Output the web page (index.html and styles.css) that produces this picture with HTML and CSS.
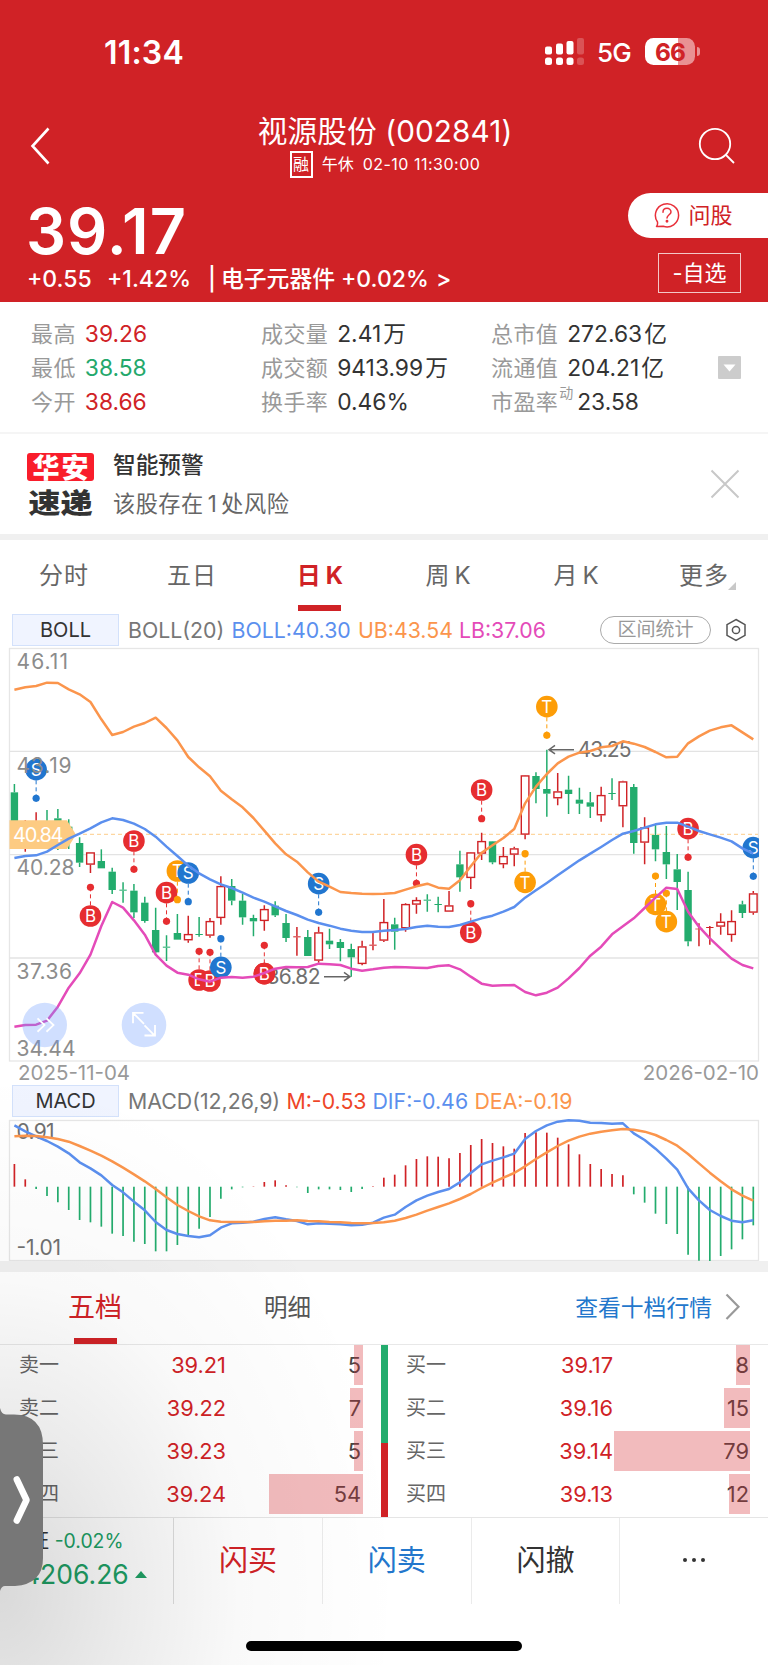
FILE: index.html
```html
<!DOCTYPE html>
<html lang="zh-CN">
<head>
<meta charset="utf-8">
<meta name="viewport" content="width=768">
<title>视源股份 (002841)</title>
<link rel="stylesheet" href="styles.css">
</head>
<body>
<div class="screen">
  <header class="header">
    <div class="status">
      <span class="clock">11:34</span>
      <svg class="signal" width="40" height="28" viewBox="0 0 40 28" fill="#fff">
        <rect x="0" y="8.500" width="7" height="8" rx="2"/><rect x="0" y="19.500" width="7" height="7.500" rx="2.500"/>
        <rect x="11" y="5.500" width="7" height="11" rx="2"/><rect x="11" y="19.500" width="7" height="7.500" rx="2.500"/>
        <rect x="21.500" y="3" width="7" height="13.500" rx="2"/><rect x="21.500" y="19.500" width="7" height="7.500" rx="2.500"/>
        <g opacity=".22"><rect x="32" y="0" width="7" height="16.500" rx="2"/><rect x="32" y="19.500" width="7" height="7.500" rx="2.500"/></g>
      </svg>
      <span class="net">5G</span>
      <div class="battery"><span>66</span></div>
      <i class="nub"></i>
    </div>
    <div class="nav">
      <svg class="back" width="22" height="38" viewBox="0 0 22 38" fill="none" stroke="#fff" stroke-width="2.600"><path d="M18.500 1.500 2.500 19l16 17.500"/></svg>
      <div class="heading">
        <h1>视源股份 (002841)</h1>
        <p><b>融</b><span>午休</span><time>02-10 11:30:00</time></p>
      </div>
      <svg class="search" width="38" height="38" viewBox="0 0 38 38" fill="none" stroke="#fff" stroke-width="1.800"><circle cx="17" cy="17" r="15.200"/><path d="M27.500 27.500 36 36"/></svg>
    </div>
    <div class="quote">
      <div class="quote-main">
        <div class="price">39.17</div>
        <div class="change"><span class="c1">+0.55</span><span class="c2">+1.42%</span><span class="c3">|</span><span class="c4">电子元器件</span><span class="c5">+0.02%</span><span class="c6">&gt;</span></div>
      </div>
      <div class="quote-side">
        <button class="ask"><svg width="26" height="26" viewBox="0 0 26 26" fill="none" stroke="#e8303a" stroke-width="1.500" stroke-linecap="round"><path d="M2.500 24.500c1-1 1.300-2.300 1-4.500A11.600 11.600 0 1 1 9.200 24.300Z" stroke-linejoin="round"/><path d="M9 10.200c0-5.200 8-5 8-.3 0 2.600-4 3.200-4 6.100" /><circle cx="13" cy="19.300" r=".7" fill="#e8303a"/></svg><span>问股</span></button>
        <button class="fav">-自选</button>
      </div>
    </div>
  </header>

  <section class="stats">
    <dl class="col">
      <div><dt>最高</dt><dd class="red">39.26</dd></div>
      <div><dt>最低</dt><dd class="green">38.58</dd></div>
      <div><dt>今开</dt><dd class="red">38.66</dd></div>
    </dl>
    <dl class="col">
      <div><dt>成交量</dt><dd>2.41<i>万</i></dd></div>
      <div><dt>成交额</dt><dd>9413.99<i>万</i></dd></div>
      <div><dt>换手率</dt><dd>0.46%</dd></div>
    </dl>
    <dl class="col">
      <div><dt>总市值</dt><dd>272.63<i>亿</i></dd></div>
      <div><dt>流通值</dt><dd>204.21<i>亿</i></dd></div>
      <div><dt>市盈率</dt><sup>动</sup><dd class="pe">23.58</dd></div>
    </dl>
    <svg class="expand" width="23" height="23" viewBox="0 0 23 23"><rect width="23" height="23" rx="1" fill="#ccc"/><path d="M5.500 8.500h12l-6 7z" fill="#fff"/></svg>
  </section>

  <section class="alert">
    <div class="logo"><b>华安</b><strong>速递</strong></div>
    <div class="alert-text"><h2>智能预警</h2><p>该股存在<i>1</i>处风险</p></div>
    <svg class="close" width="30" height="30" viewBox="0 0 30 30" stroke="#c8c8c8" stroke-width="2"><path d="m1.500 1.500 27 27m0-27-27 27"/></svg>
  </section>

  <nav class="tabs">
    <a>分时</a><a>五日</a><a class="on">日<i>K</i></a><a>周<i>K</i></a><a>月<i>K</i></a><a>更多<s></s></a>
  </nav>

  <section class="indicator">
    <button class="tag">BOLL</button>
    <div class="legend"><span>BOLL(20)</span><span class="blue">BOLL:40.30</span><span class="orange">UB:43.54</span><span class="pink">LB:37.06</span></div>
    <button class="range">区间统计</button>
    <svg class="gear" width="22" height="24" viewBox="0 0 22 24" fill="none" stroke="#555" stroke-width="1.500"><path d="M11 1.500 20 6.700v10.600L11 22.500 2 17.300V6.700z"/><circle cx="11" cy="12" r="3.600"/></svg>
  </section>
  <svg id="kline" class="kline" width="768" height="415" viewBox="0 0 768 415"></svg>
  <div class="dates"><time>2025-11-04</time><time>2026-02-10</time></div>

  <section class="indicator macd-row">
    <button class="tag">MACD</button>
    <div class="legend legend-macd"><span>MACD(12,26,9)</span><span class="m">M:-0.53</span><span class="blue">DIF:-0.46</span><span class="orange">DEA:-0.19</span></div>
  </section>
  <svg id="macd" class="macd" width="768" height="142" viewBox="0 0 768 142"></svg>

  <section class="depth">
    <div class="depth-head">
      <a class="on">五档</a><a class="detail">明细</a>
      <a class="more">查看十档行情</a>
      <svg width="16" height="28" viewBox="0 0 16 28" fill="none" stroke="#999" stroke-width="2.200"><path d="m1.500 1.500 12 12.300-12 12.300"/></svg>
    </div>
    <div class="book">
      <ul class="side sell">
        <li><span>卖一</span><b>39.21</b><em><u class="w1"></u>5</em></li>
        <li><span>卖二</span><b>39.22</b><em><u class="w2"></u>7</em></li>
        <li><span>卖三</span><b>39.23</b><em><u class="w1"></u>5</em></li>
        <li><span>卖四</span><b>39.24</b><em><u class="w3"></u>54</em></li>
      </ul>
      <div class="ratio"></div>
      <ul class="side buy">
        <li><span>买一</span><b>39.17</b><em><u class="w4"></u>8</em></li>
        <li><span>买二</span><b>39.16</b><em><u class="w5"></u>15</em></li>
        <li><span>买三</span><b>39.14</b><em><u class="w6"></u>79</em></li>
        <li><span>买四</span><b>39.13</b><em><u class="w7"></u>12</em></li>
      </ul>
    </div>
  </section>

  <footer class="actions">
    <div class="index"><p>上证 <span>-0.02%</span></p><strong>4206.26<i></i></strong></div>
    <a class="buy-now">闪买</a><a class="sell-now">闪卖</a><a>闪撤</a><a class="dots"><i></i><i></i><i></i></a>
  </footer>
  <div class="home"></div>

  <div class="shade"></div>
  <svg class="handle" width="44" height="184" viewBox="0 0 44 184"><path d="M0 0Q1.500 6.500 6 6.500H14Q43 7 43 37V150Q43 176 15 178H5Q1.500 178 0 183Z" fill="#777"/><path d="M16.800 71.500 26.500 92 16.800 112.500" fill="none" stroke="#fff" stroke-width="6.500" stroke-linecap="round" stroke-linejoin="round"/></svg>
</div>
<script src="chart.js"></script>
</body>
</html>
```

FILE: styles.css
```css
* { box-sizing: border-box; margin: 0; padding: 0; }
body { background: #fff; font-family: Inter, "Noto Sans CJK SC", sans-serif; color: #333; }
i, em { font-style: normal; }
ul { list-style: none; }
button { font: inherit; border: 0; background: none; }
.screen { position: relative; width: 768px; height: 1665px; overflow: hidden; display: flex; flex-direction: column; white-space: nowrap; }
.screen > * { flex: none; }

.header { height: 302px; background: #d02226; color: #fff; }
.status { display: flex; align-items: flex-start; height: 103px; padding: 38px 0 0 104px; }
.clock { width: 441px; font-size: 32px; font-weight: 600; line-height: 29px; letter-spacing: 0.200px; }
.net { margin-left: 12px; width: 48px; font-size: 26px; font-weight: 500; line-height: 30px; letter-spacing: -0.800px; }
.battery { width: 50px; height: 27px; border-radius: 8.500px; background: linear-gradient(90deg, #fff 33px, #e99193 33px); color: #d02226; text-align: center; font-size: 24.500px; font-weight: 700; line-height: 28px; letter-spacing: -0.800px; }
.nub { width: 3px; height: 9px; margin: 9px 0 0 2px; border-radius: 0 4px 4px 0; background: #e99193; }
.nav { display: flex; height: 85px; }
.back { margin: 24px 0 0 30px; width: 22px; }
.heading { flex: 1; padding: 11px 0 0 0; margin-left: 20px; text-align: center; }
.heading h1 { font-size: 29.700px; font-weight: 400; line-height: 35px; letter-spacing: .1px; }
.heading p { display: flex; justify-content: center; align-items: center; font-size: 16px; line-height: 20px; margin-top: 1px; height: 28px; }
.heading p b { width: 23px; height: 27px; border: 2px solid #fff; font-size: 16px; line-height: 22px; font-weight: 400; margin-right: 9px; display: flex; justify-content: center; }
.heading p time { margin-left: 9px; letter-spacing: .5px; }
.search { margin: 24px 32px 0 0; }
.quote { display: flex; justify-content: space-between; padding-left: 27px; }
.price { font-size: 63px; font-weight: 600; line-height: 60px; margin-top: 13px; letter-spacing: 1px; margin-left: -1px; }
.change { display: flex; font-size: 23px; font-weight: 500; line-height: 30px; margin-top: 3px; }
.c1 { width: 80px; } .c2 { width: 101px; } .c3 { width: 13px; } .c4 { width: 120px; font-size: 22.800px; } .c5 { width: 95px; }
.quote-side { display: flex; flex-direction: column; align-items: flex-end; padding-top: 5px; }
.ask { display: flex; width: 140px; height: 45px; border-radius: 23px 0 0 23px; background: #fff; color: #d02226; font-size: 22px; line-height: 45px; padding: 9px 0 0 26px; }
.ask span { margin: -9px 0 0 8.500px; }
.fav { width: 83px; height: 40px; margin: 15px 27px 0 0; border: 1px solid #f3c7c8; color: #fff; font-size: 22px; line-height: 37px; }

.stats { height: 131px; padding: 14px 0 0 31px; display: flex; position: relative; font-size: 22px; }
.stats .col { width: 230px; }
.stats .col div { height: 34px; line-height: 36px; display: flex; }
.stats dt { color: #999; margin-right: 9px; letter-spacing: .4px; }
.stats dd { color: #333; font-size: 22.800px; }
.stats dd i { margin-left: 2px; }
.stats sup { font-size: 14px; line-height: 18px; color: #999; margin: 0 4px 0 -8px; }
.stats .red { color: #d02226; }
.stats .green { color: #24a86b; }
.expand { position: absolute; left: 718px; top: 54px; }

.alert { border-top: 2px solid #f5f5f5; border-bottom: 6px solid #f0f0f0; display: flex; padding-left: 27px; margin-top: -1px; height: 108px; }
.logo { width: 67px; margin: 19px 19px 0 0; text-align: center; }
.logo b { display: block; height: 28px; border-radius: 3px; background: #f91d2b; color: #fff; font: 900 27px/27px "Noto Sans CJK SC", sans-serif; letter-spacing: 2px; text-indent: 2px; }
.logo strong { display: block; margin-top: 6px; font: 900 32px/29px "Noto Sans CJK SC", sans-serif; transform: scaleY(.86); }
.alert-text { flex: 1; }
.alert h2 { font-size: 22.700px; font-weight: 500; line-height: 34px; margin-top: 14px; }
.alert p { font-size: 22.200px; line-height: 38px; margin-top: 3px; color: #666; letter-spacing: .5px; }
.alert p i { margin: 0 4px; }
.close { margin: 35px 28px 0 0; }

.tabs { height: 72px; display: flex; }
.tabs a { width: 128.200px; text-align: center; font-size: 24px; line-height: 72px; height: 72px; color: #666; position: relative; letter-spacing: 1px; }
.tabs a i { margin-left: 4px; font-size: 24px; letter-spacing: 0; }
.tabs .on { color: #d02226; font-weight: 700; }
.tabs .on::after { content: ""; position: absolute; left: 42px; top: 65px; width: 43px; height: 6px; background: #d02226; }
.tabs s { position: absolute; right: 32px; top: 42px; border: solid transparent; border-width: 0 0 8px 8px; border-bottom-color: #c8c8c8; }

.indicator { height: 35px; display: flex; padding: 2px 0 0 12px; }
.tag { width: 107px; height: 32px; background: #f0f4ff; border: 1.500px solid #d3e1fb; font-size: 20px; color: #333; line-height: 29px; }
.legend { display: flex; margin-left: 9px; width: 472px; font-size: 21.300px; line-height: 32px; color: #777; }
.legend span:nth-child(1) { width: 103.500px; }
.legend span:nth-child(2) { width: 126.500px; }
.legend span:nth-child(3) { width: 101px; }
.legend .blue { color: #5b8fee; }
.legend .orange { color: #fb954c; }
.legend .pink { color: #e44bb9; }
.legend .m { color: #ee4528; }
.legend-macd span:nth-child(1) { width: 158.500px; }
.legend-macd span:nth-child(2) { width: 86px; }
.legend-macd span:nth-child(3) { width: 102px; }
.range { width: 111px; height: 28px; margin-top: 2px; border: 1.500px solid #aaa; border-radius: 14px; font-size: 19px; line-height: 24px; color: #999; }
.gear { margin: 4px 0 0 14px; }
.kline { display: block; }
.dates { display: flex; justify-content: space-between; height: 23px; padding: 0 9px 0 18px; font-size: 20.500px; line-height: 22px; color: #999; }
.macd-row { height: 34px; padding-top: 0; }
.macd { display: block; }

.depth { border-top: 11px solid #f0f0f0; height: 256px; }
.depth-head { height: 73px; border-bottom: 1.500px solid #e8e8e8; display: flex; padding: 0 27px 0 68px; line-height: 71px; font-size: 23.500px; color: #555; }
.depth-head .on { color: #d02226; font-size: 27px; width: 196px; position: relative; }
.depth-head .on::after { content: ""; position: absolute; left: 6px; top: 66px; width: 43px; height: 6px; background: #d02226; }
.depth-head .more { margin-left: auto; margin-right: 13px; font-size: 22.800px; color: #2377cc; }
.depth-head svg { margin-top: 21px; }
.book { display: flex; height: 173px; }
.side { height: 173px; overflow: hidden; }
.side li { display: flex; height: 43px; line-height: 41px; font-size: 21.800px; }
.side span { font-size: 20px; color: #666; }
.side b { font-weight: 400; color: #d02226; text-align: right; }
.side em { position: relative; text-align: right; color: #444; padding-right: 2px; }
.side u { position: absolute; right: 0; top: 0; height: 39.500px; background: rgba(215, 45, 50, .32); }
.sell { width: 380.500px; padding-left: 19px; }
.sell span { width: 100px; } .sell b { width: 107px; } .sell em { width: 137px; }
.buy { padding-left: 18px; }
.buy span { width: 100px; } .buy b { width: 107px; } .buy em { width: 137px; padding-right: 1px; }
.ratio { width: 7.500px; height: 173px; background: linear-gradient(#23ac6d 98px, #d02226 98px); }
.w1 { width: 9px; } .w2 { width: 13px; } .w3 { width: 94px; } .w4 { width: 14px; } .w5 { width: 26px; } .w6 { width: 136px; } .w7 { width: 21px; }

.actions { height: 87px; border-top: 1.500px solid #e5e5e5; display: flex; }
.actions a { width: 149px; border-left: 1px solid #ebebeb; text-align: center; font-size: 29px; line-height: 86px; color: #333; }
.actions .buy-now { color: #d02226; border-color: #ddd; }
.actions .sell-now { color: #2377cc; }
.index { width: 173.500px; color: #20a065; padding: 8px 0 0 9px; }
.index p { font-size: 20px; line-height: 30px; color: #333; }
.index span { font-size: 19.400px; color: #20a065; }
.index strong { display: flex; align-items: center; font-weight: 400; font-size: 26.500px; line-height: 38px; padding-left: 14px; margin-top: -1px; }
.index strong i { border: solid transparent; border-width: 0 6px 7.500px; border-bottom-color: #20a065; margin-left: 6px; }
.actions .dots { display: flex; justify-content: center; gap: 5px; padding-top: 40px; }
.dots i { width: 4px; height: 4px; border-radius: 2px; background: #333; }
.home { width: 276px; height: 10px; border-radius: 5px; background: #000; margin: 37px 0 0 246px; }

.shade { position: absolute; left: 0; top: 1070px; width: 420px; height: 595px; pointer-events: none; background: radial-gradient(ellipse 400px 520px at 0 520px, rgba(0, 0, 0, .15), rgba(0, 0, 0, .08) 32%, rgba(0, 0, 0, .025) 60%, transparent); }
.handle { position: absolute; left: 0; top: 1408px; }

svg text { font-family: Inter, sans-serif; }
.axis { font-size: 21px; fill: #8c8c8c; }
.dark { fill: #707070; }
.tip { font-size: 20px; fill: #fff; }
.badge { font-size: 17px; fill: #fff; text-anchor: middle; }
```

FILE: chart.js
```js
const RED = '#d02226', GREEN = '#23ac6d', BLUE = '#5b8fee', ORANGE = '#fb954c', PINK = '#e44bb9';
const MARK = { B: '#e62d30', S: '#2176cf', T: '#fd9d07' };
const X = i => +(14.4 + i * 10.866).toFixed(2);

// high, top, bottom, low in thirds of a pixel; r = rising, g = falling
const candles = `g 432 457 560 570|r 540 560 620 635|r 517 560 600 600|g 510 560 600 620|g 507 535 600 630|g 538 560 600 627|g 592 609 668 681|r 637 637 674 699|g 628 663 685 685|g 683 695 750 762|g 727 749 752 788|g 732 752 817 834|g 770 788 843 848|g 803 870 937 940|g 886 920 923 963|g 822 879 899 899|r 827 882 901 908|g 831 882 885 890|r 834 843 887 893|r 709 738 834 854|g 717 738 782 796|g 762 782 832 854|g 824 834 844 889|r 796 807 843 872|g 784 797 826 831|g 822 849 894 906|r 861 889 892 947|g 870 891 948 948|r 860 877 962 968|g 866 902 913 927|g 897 906 924 964|g 911 927 952 1010|r 902 919 972 976|r 878 914 917 931|r 777 846 902 906|g 833 853 875 929|r 790 792 865 875|r 772 780 794 821|g 763 779 782 815|g 770 792 795 817|r 753 796 815 815|g 632 673 712 755|r 636 637 714 747|r 578 603 641 660|g 603 604 667 673|r 621 648 673 685|r 620 625 644 679|r 405 406 584 598|g 397 408 447 490|g 329 447 461 530|r 399 454 475 496|g 407 449 462 522|g 443 479 491 522|g 456 487 500 534|r 440 465 526 545|g 415 459 462 480|r 422 424 499 562|g 432 441 609 641|r 532 562 608 673|g 552 585 628 664|g 558 636 673 717|g 642 688 726 810|g 695 750 904 919|r 850 866 868 919|r 858 861 864 914|r 820 845 860 884|r 811 843 885 905|g 782 793 819 834|r 753 760 818 824`.split('|').map(s => s.split(' '));
const ub = [149,142,138,128,129,148,163,186,238,285,276,260,249,233,264,301,351,382,409,452,478,502,534,572,610,643,665,697,725,740,756,759,761,762,761,759,749,739,731,743,746,721,679,638,616,594,567,490,440,402,370,350,338,333,322,318,304,311,321,336,352,350,310,289,272,262,256,277,298];
const mid = [654,648,646,635,615,596,581,565,547,535,540,551,567,590,620,648,677,700,718,733,744,758,773,785,799,813,825,839,849,857,866,872,876,876,872,870,867,861,857,860,861,855,845,835,827,815,801,773,751,729,706,683,661,641,621,600,581,573,563,553,548,548,560,573,583,593,604,625,641];
const lb = [1160,1155,1154,1142,1100,1043,1000,944,858,786,803,841,884,944,977,998,1004,1018,1025,1013,1011,1013,1010,999,986,981,982,981,971,973,975,986,992,988,983,981,982,983,984,978,976,988,1010,1031,1037,1036,1035,1056,1066,1058,1043,1015,984,947,920,883,859,835,804,773,743,747,815,860,895,926,956,975,985];
const marks = [[2,'S',389,475],[7,'B',828,742],[11,'B',603,688],[14,'B',758,844],[15,'T',693,779],[16,'S',699,785],[17,'B',1020,934],[18,'B',1023,937],[19,'S',982,896],[23,'B',1001,916],[28,'S',731,817],[37,'B',644,730],[42,'B',877,791],[43,'B',450,536],[47,'T',727,641],[49,'T',200,286],[59,'T',793,708],[60,'T',845,760],[62,'B',566,652],[68,'S',623,709]];

const poly = (data, y, color) => `<polyline fill="none" stroke="${color}" stroke-width="2.500" stroke-linejoin="round" points="${data.map((v, i) => X(i) + ',' + y(v).toFixed(2)).join(' ')}"/>`;
const label = (x, y, w, t, cls = 'axis') => `<text class="${cls}" x="${x}" y="${y}" textLength="${w}">${t}</text>`;

function drawKline() {
  const Y = v => v / 3 - 7;
  let s = '<defs><clipPath id="plot"><rect x="9" y="0" width="750" height="415"/></clipPath></defs>';
  s += `<rect x="9.500" y="1.500" width="749" height="412.500" fill="none" stroke="#e6e6e6" stroke-width="1.300"/>`;
  for (const v of [334, 644, 954]) s += `<path d="M9.500 ${Y(v)}H758.500" stroke="#e3e3e3" stroke-width="1.400"/>`;
  s += `<path d="M76 ${Y(583)}H758" stroke="#fdd6a0" stroke-width="1.200" stroke-dasharray="4 3"/>`;
  s += '<g clip-path="url(#plot)">';
  candles.forEach(([k, h, t, b, l], i) => {
    const x = X(i), c = k === 'r' ? RED : GREEN, th = b - t;
    s += `<path d="M${x} ${Y(h)}V${Y(t)}M${x} ${Y(b)}V${Y(l)}" stroke="${c}" stroke-width="1.500"/>`;
    s += k === 'r' && th > 5
      ? `<rect x="${x - 3.800}" y="${Y(t) + .6}" width="7.600" height="${th / 3 - 1.2}" fill="#fff" stroke="${c}" stroke-width="1.400"/>`
      : `<rect x="${x - 3.700}" y="${Y(t)}" width="7.400" height="${th / 3}" fill="${c}"/>`;
  });
  for (const [i, ch, cy, dy] of marks) {
    const x = X(i), c = MARK[ch];
    s += `<path d="M${x} ${Y(dy)}V${Y(cy)}" stroke="${c}" stroke-width="1" stroke-dasharray="4 3"/><circle cx="${x}" cy="${Y(dy)}" r="3.600" fill="${c}"/><circle cx="${x}" cy="${Y(cy)}" r="10.800" fill="${c}"/>`;
    if (i !== 23) s += `<text class="badge" x="${x}" y="${Y(cy) + 6.2}">${ch}</text>`;
  }
  s += '</g>';
  s += `<path d="M9.500 ${Y(541)}H67L76 ${Y(584)}L67 ${Y(627)}H9.500Z" fill="#fdcb82"/>`;
  s += label(13, Y(605), 50.500, '40.84', 'tip');
  s += label(16.500, Y(88), 51.500, '46.11') + label(16.500, Y(398), 55, '43.19') + label(16.500, Y(706), 58, '40.28') + label(16.500, Y(1017), 55.500, '37.36') + label(16.500, Y(1248), 59, '34.44');
  s += label(266.500, Y(1033), 54, '36.82', 'axis dark') + label(577.500, Y(350), 54, '43.25', 'axis dark');
  s += `<path d="M324 ${Y(1010)}H350M344 ${Y(997)}l6 4.300-6 4.300M574 ${Y(329)}H549M555 ${Y(316)}l-6 4.300 6 4.300" fill="none" stroke="#666" stroke-width="1.500"/>`;
  // a badge hides the head of the low-price label
  s += `<circle cx="${X(23)}" cy="${Y(1001)}" r="10.800" fill="${MARK.B}"/><text class="badge" x="${X(23)}" y="${Y(1001) + 6.2}">B</text>`;
  s += poly(ub, Y, ORANGE) + poly(mid, Y, BLUE) + poly(lb, Y, PINK);
  for (const cx of [44.700, 144]) s += `<circle cx="${cx}" cy="${Y(1155)}" r="22.300" fill="#6e9bff" fill-opacity=".32"/>`;
  s += `<path d="M37.500 ${Y(1135)}l7 6.700-7 6.700M46.500 ${Y(1135)}l7 6.700-7 6.700M133 ${Y(1150)}v-10.500h10.500M133.500 ${Y(1120)}l10.500 10.500M155 ${Y(1155)}v10.500h-10.500M154.500 ${Y(1186)}l-10-10" fill="none" stroke="#fff" stroke-width="1.800"/>`;
  document.getElementById('kline').innerHTML = s;
}

const bars = [282,328,357,378,397,420,450,457,470,491,498,515,522,544,544,525,496,476,441,386,358,352,349,336,331,346,352,369,358,358,360,366,357,349,323,314,286,267,259,260,265,249,225,207,219,229,236,189,187,188,203,223,253,282,297,312,316,373,398,431,462,492,554,572,573,558,538,508,466];
const dif = [166,184,199,213,230,250,277,295,316,345,367,395,421,456,480,492,498,502,496,473,460,458,455,447,442,448,453,463,460,461,463,466,464,458,443,434,411,391,377,366,357,337,309,283,272,262,251,207,183,166,155,151,152,158,159,161,160,190,210,236,266,299,355,391,420,438,452,457,451];
const dea = [199,197,198,202,207,215,228,242,257,274,293,313,334,357,382,405,423,439,451,455,456,456,456,454,452,452,451,453,454,456,457,459,460,459,457,452,444,434,422,411,400,387,372,354,338,323,309,289,267,247,228,212,200,191,185,181,177,179,185,195,210,227,252,280,308,334,358,377,392];

function drawMacd() {
  const Y = v => v / 3 - 49;
  let s = `<rect x="9.500" y="1.500" width="749" height="140" fill="none" stroke="#e6e6e6" stroke-width="1.300"/>`;
  bars.forEach((v, i) => {
    s += `<path d="M${X(i)} ${Y(350)}V${Y(v)}" stroke="${v < 350 ? RED : GREEN}" stroke-width="1.700"/>`;
  });
  s += label(16.500, Y(207), 38, '0.91', 'axis dark') + label(16.500, Y(554), 44.500, '-1.01', 'axis dark');
  s += poly(dif, Y, BLUE) + poly(dea, Y, ORANGE);
  document.getElementById('macd').innerHTML = s;
}

drawKline();
drawMacd();
```
